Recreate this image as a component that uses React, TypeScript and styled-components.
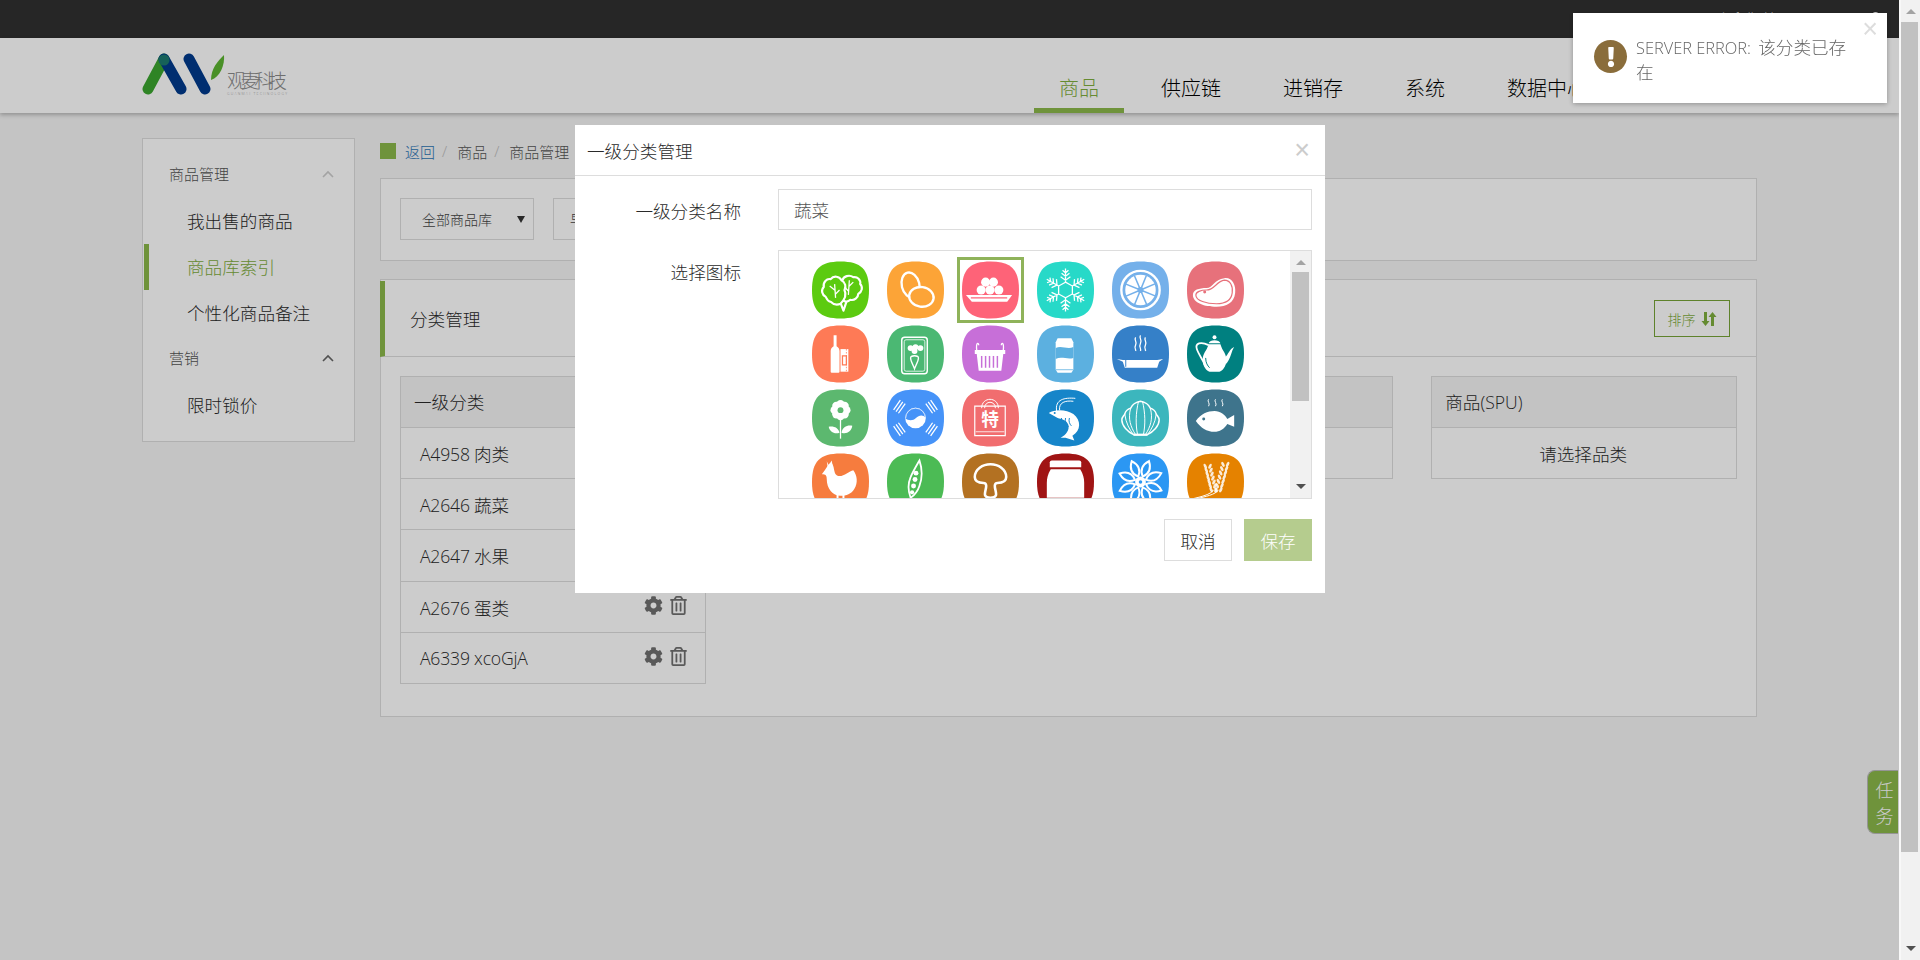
import React from 'react';
import styled, { createGlobalStyle } from 'styled-components';
import { FaCog, FaRegTrashAlt, FaExclamation, FaUser } from 'react-icons/fa';

const GlobalStyle = createGlobalStyle`
  html, body {
    margin: 0;
    height: 100%;
    overflow: hidden;
    background: #f5f5f5;
    color: #2a2a2a;
    font-family: "Open Sans", "Noto Sans CJK SC", sans-serif;
    font-size: 17.6px;
    font-weight: 300;
  }
  * { box-sizing: border-box; }
`;

const GREEN = '#8bb84a';
const GREEN_TEXT = '#7fae3e';
const LINE = '#ddd';

// page
const Shell = styled.div`
  display: flex;
  height: 960px;
  overflow: hidden;
`;

const Page = styled.div`
  width: 1899px;
  flex: none;
  background: #f5f5f5;
`;

const TopBar = styled.div`
  height: 38px;
  background: #303030;
  color: #fff;
  display: flex;
  justify-content: flex-end;
  align-items: center;
  gap: 60px;
  padding-right: 16px;
  font-size: 15px;
  line-height: 20px;
`;

const Header = styled.header`
  height: 75px;
  background: #fff;
  box-shadow: 0 2px 4px rgba(0, 0, 0, 0.25);
  display: flex;
  justify-content: space-between;
  padding: 0 287px 0 128px;
`;

const Logo = styled.svg`
  width: 180px;
  height: 48px;
  margin-top: 15px;
`;

const Nav = styled.nav`
  display: flex;
  gap: 12px;
  align-items: flex-end;
`;

const NavItem = styled.a<{ $active?: boolean }>`
  height: 75px;
  padding: 36px 25px 0;
  font-size: 20px;
  line-height: 30px;
  white-space: nowrap;
  color: ${(p) => (p.$active ? GREEN_TEXT : '#000')};
  border-bottom: 5px solid ${(p) => (p.$active ? GREEN : 'transparent')};
`;

const Container = styled.div`
  display: flex;
  gap: 25px;
  padding: 25px 142px 0;
  align-items: flex-start;
`;

// sidebar
const Sidebar = styled.aside`
  width: 213px;
  flex: none;
  background: #fff;
  border: 1px solid ${LINE};
  padding: 13px 0 13px 1px;
`;

const SideGroup = styled.div`
  height: 46px;
  padding: 0 20px 3px 25px;
  display: flex;
  justify-content: space-between;
  align-items: center;
  font-size: 15px;
  color: #555;
`;

const Chevron = styled.svg<{ $dim?: boolean }>`
  width: 12px;
  height: 8px;
  fill: none;
  stroke: ${(p) => (p.$dim ? '#ccc' : '#666')};
  stroke-width: 1.6;
`;

const SideItem = styled.a<{ $active?: boolean }>`
  display: block;
  height: 46px;
  line-height: 46px;
  padding-left: 38px;
  font-size: 17.6px;
  color: ${(p) => (p.$active ? GREEN_TEXT : '#2a2a2a')};
  border-left: 5px solid ${(p) => (p.$active ? GREEN : 'transparent')};
`;

// main column
const Main = styled.main`
  flex: 1;
  min-width: 0;
`;

const Crumbs = styled.div`
  display: flex;
  align-items: center;
  height: 16px;
  margin: 5px 0 19px;
  font-size: 15px;
  color: #555;
`;

const CrumbMark = styled.span`
  width: 16px;
  height: 16px;
  background: ${GREEN};
  margin-right: 9px;
`;

const CrumbLink = styled.a`
  color: #2a74b5;
`;

const CrumbSlash = styled.span`
  color: #bbb;
  margin: 0 10px 0 7px;
`;

const FilterPanel = styled.section`
  height: 83px;
  background: #fff;
  border: 1px solid ${LINE};
  padding: 19px;
  display: flex;
  gap: 19px;
  margin-bottom: 18px;
`;

const Select = styled.div<{ $inset: number }>`
  width: 134px;
  height: 42px;
  border: 1px solid ${LINE};
  padding: 0 8px 0 ${(p) => p.$inset}px;
  display: flex;
  justify-content: space-between;
  align-items: center;
  font-size: 14px;
  color: #444;
`;

const Caret = styled.span`
  width: 0;
  height: 0;
  border-left: 4px solid transparent;
  border-right: 4px solid transparent;
  border-top: 7px solid #333;
`;

const CategoryPanel = styled.section`
  background: #fff;
  border: 1px solid ${LINE};
  height: 438px;
`;

const PanelHead = styled.div`
  height: 76px;
  margin: 1px 0 0 -1px;
  border-left: 5px solid ${GREEN};
  border-bottom: 1px solid ${LINE};
  display: flex;
  justify-content: space-between;
  align-items: center;
  padding: 0 26px 0 25px;
`;

const SortButton = styled.button`
  width: 76px;
  height: 37px;
  border: 1px solid #76a336;
  background: #fff;
  color: ${GREEN_TEXT};
  font: inherit;
  font-size: 14px;
  display: flex;
  align-items: center;
  justify-content: center;
  gap: 5px;
  padding: 0;
`;

const Columns = styled.div`
  display: grid;
  grid-template-columns: repeat(4, 1fr);
  gap: 38px;
  padding: 19px 19px 0;
  align-items: start;
`;

const Table = styled.div`
  border: 1px solid ${LINE};
  border-bottom: 0;
`;

const TableHead = styled.div`
  height: 51px;
  line-height: 50px;
  padding-left: 13px;
  background: #f4f4f4;
  border-bottom: 1px solid ${LINE};
`;

const TableRow = styled.div`
  height: 51.2px;
  padding: 1px 17px 0 19px;
  border-bottom: 1px solid ${LINE};
  display: flex;
  justify-content: space-between;
  align-items: center;
  letter-spacing: -0.2px;
`;

const EmptyRow = styled(TableRow)`
  justify-content: center;
  letter-spacing: 0;
  padding: 0 19px 0 17px;
`;

const RowTools = styled.span`
  display: flex;
  gap: 6px;
  align-items: center;
  color: #707070;
  font-size: 19px;
  margin-top: -3px;
`;

const TaskTab = styled.div`
  position: fixed;
  right: 22px;
  top: 770px;
  width: 31px;
  height: 64px;
  background: ${GREEN};
  border: 1px solid #bbb;
  border-right: 0;
  border-radius: 8px 0 0 8px;
  color: #fff;
  font-size: 18px;
  line-height: 26px;
  text-align: center;
  padding: 6px 0 0 3px;
`;

// browser scrollbar, drawn because the window is fixed
const PageScroll = styled.div`
  width: 21px;
  flex: none;
  background: #f1f1f1;
  border-left: 2px solid #f8f8f8;
  padding: 0 2px 0 0;
  display: flex;
  flex-direction: column;
  align-items: stretch;
  position: relative;
`;

const PageThumb = styled.div`
  height: 830px;
  margin-top: 22px;
  background: #c1c1c1;
`;

const ArrowUp = styled.span`
  position: absolute;
  left: 50%;
  margin-left: -5px;
  top: 9px;
  width: 0;
  height: 0;
  border-left: 5px solid transparent;
  border-right: 5px solid transparent;
  border-bottom: 5px solid #a3a3a3;
`;

const ArrowDown = styled.span`
  position: absolute;
  left: 50%;
  margin-left: -5px;
  bottom: 9px;
  width: 0;
  height: 0;
  border-left: 5px solid transparent;
  border-right: 5px solid transparent;
  border-top: 5px solid #505050;
`;

// overlay and modal
const Backdrop = styled.div`
  position: fixed;
  left: 0;
  top: 0;
  width: 1899px;
  height: 960px;
  background: rgba(0, 0, 0, 0.2);
`;

const Modal = styled.div`
  position: fixed;
  left: 575px;
  top: 125px;
  width: 750px;
  height: 468px;
  background: #fff;
`;

const ModalHead = styled.div`
  height: 51px;
  border-bottom: 1px solid ${LINE};
  display: flex;
  justify-content: space-between;
  align-items: center;
  padding: 0 15px 0 12px;
`;

const CloseX = styled.span`
  color: #ccc;
  font-size: 27px;
  font-family: "Liberation Sans", sans-serif;
  line-height: 1;
`;

const ModalBody = styled.div`
  padding: 13px 13px 0 0;
`;

const FormRow = styled.div`
  display: flex;
  margin-bottom: 20px;
`;

const FormLabel = styled.label`
  width: 166px;
  flex: none;
  text-align: right;
  line-height: 44px;
  height: 41px;
  margin-right: 37px;
`;

const NameInput = styled.div`
  flex: 1;
  height: 41px;
  border: 1px solid ${LINE};
  padding: 0 15px;
  line-height: 41px;
  color: #555;
`;

const IconBox = styled.div`
  flex: 1;
  height: 249px;
  border: 1px solid ${LINE};
  display: flex;
  overflow: hidden;
`;

const IconGrid = styled.div`
  flex: 1;
  display: grid;
  grid-template-columns: repeat(6, 75px);
  grid-auto-rows: 64px;
  padding: 7px 0 0 24px;
  align-content: start;
`;

const IconCell = styled.div<{ $selected?: boolean }>`
  position: relative;
  display: flex;
  align-items: center;
  justify-content: center;
  &::after {
    content: '';
    display: ${(p) => (p.$selected ? 'block' : 'none')};
    position: absolute;
    left: 4px;
    right: 4px;
    top: -1px;
    bottom: -1px;
    border: 3px solid #8fb35a;
  }
`;

const IconSvg = styled.svg`
  width: 57px;
  height: 58px;
  display: block;
`;

const BoxScroll = styled.div`
  width: 21px;
  flex: none;
  background: #f1f1f1;
  position: relative;
  padding: 21px 2px 0;
`;

const BoxThumb = styled.div`
  height: 129px;
  background: #c1c1c1;
`;

const ModalFoot = styled.div`
  display: flex;
  justify-content: flex-end;
  gap: 12px;
`;

const FootButton = styled.button<{ $primary?: boolean }>`
  width: 68px;
  height: 42px;
  font: inherit;
  padding: 0;
  border: 1px solid ${(p) => (p.$primary ? '#b5cc8e' : LINE)};
  background: ${(p) => (p.$primary ? '#b5cc8e' : '#fff')};
  color: ${(p) => (p.$primary ? '#fff' : '#2a2a2a')};
`;

// toast
const Toast = styled.div`
  position: fixed;
  left: 1573px;
  top: 13px;
  width: 314px;
  height: 90px;
  background: #fff;
  box-shadow: 0 1px 5px rgba(0, 0, 0, 0.3);
  display: flex;
  padding: 22px 22px 0 21px;
  gap: 9px;
`;

const ToastIcon = styled.span`
  width: 33px;
  height: 33px;
  flex: none;
  margin-top: 5px;
  border-radius: 50%;
  background: #8a6d3b;
  color: #fff;
  font-size: 20px;
  display: flex;
  align-items: center;
  justify-content: center;
`;

const ToastText = styled.div`
  color: #666;
  font-size: 16.4px;
  line-height: 25px;
  width: 222px;
`;

const ToastCjk = styled.span`
  font-size: 17.6px;
  margin-left: 3px;
`;

const ToastClose = styled(CloseX)`
  position: absolute;
  right: 9px;
  top: 3px;
  color: #ddd;
`;

// category pictures, all drawn on a 58x58 tile
const W = '#fff';
const spin = (n: number) => Array.from({ length: n }, (_, i) => (i * 360) / n);

const sheaf = (x1: number, y1: number, x2: number, y2: number, sx: number) => (
  <g key={x1}>
    <path d={`M${x2} ${y2}C${x2 - 3} ${y2 + 5} ${sx + 8} ${y2 + 7} ${sx} 46`} fill="none" stroke={W} strokeWidth="1" />
    {[0, 1, 2, 3, 4, 5, 6].map((i) => {
      const x = x1 + ((x2 - x1) * i) / 6;
      const y = y1 + ((y2 - y1) * i) / 6;
      return (
        <g key={i} opacity="0.85">
          <ellipse cx={x - 2.4} cy={y} rx="1.400" ry="2.800" transform={`rotate(-28 ${x - 2.4} ${y})`} />
          <ellipse cx={x + 2.4} cy={y} rx="1.400" ry="2.800" transform={`rotate(28 ${x + 2.4} ${y})`} />
        </g>
      );
    })}
  </g>
);

const icons: { bg: string; draw: (bg: string) => React.ReactNode }[] = [
  {
    bg: '#5ccb10',
    draw: () => (
      <g fill="none" stroke={W} strokeWidth="2.200" strokeLinejoin="round">
        <path d="M29 43c-4 2-8 0-10-2-3 0-4-3-5-5-4-2-5-7-2-10-1-5 3-9 7-8 3-4 9-3 11 1 4 2 5 7 3 10 2 4 1 9-4 14z" />
        <path d="M31 19c1-4 7-6 11-3 4-1 8 3 7 7 3 3 2 8-2 10 0 4-4 7-8 6-2 2-5 2-7 1" />
        <path d="M23 23l1 14M23 29l-5-4M24 33l4-4M38 19l-1 15M38 25l4-4M37 30l-4-4" strokeWidth="1.300" />
        <path d="M29 42l3 8 3-9" />
      </g>
    ),
  },
  {
    bg: '#fca437',
    draw: (bg) => (
      <g stroke={W} strokeWidth="2.400" fill={bg}>
        <ellipse cx="24" cy="24" rx="9" ry="13" transform="rotate(-14 24 24)" />
        <ellipse cx="35" cy="36" rx="12.500" ry="10" transform="rotate(8 35 36)" />
      </g>
    ),
  },
  {
    bg: '#fe6378',
    draw: (bg) => (
      <g fill={W}>
        <circle cx="24" cy="21" r="4.600" />
        <circle cx="32" cy="21" r="4.600" />
        <circle cx="19.500" cy="29" r="4.600" />
        <circle cx="28.500" cy="29" r="4.600" />
        <circle cx="37.500" cy="29" r="4.600" />
        <path d="M4 34h47l-5 7H10z" />
        <path d="M9 37h37" stroke={bg} strokeWidth="1.300" />
      </g>
    ),
  },
  {
    bg: '#27d9c8',
    draw: () => (
      <g stroke={W} strokeWidth="1.300" fill="none">
        {spin(6).map((a) => (
          <g key={a} transform={`rotate(${a} 29 29)`}>
            <path d="M29 21V7M26 9l3 2.500 3-2.500M25 12l4 3 4-3M24 15.500l5 3.500 5-3.500" />
          </g>
        ))}
        <path d="M29 21l7 4v8l-7 4-7-4v-8z" />
      </g>
    ),
  },
  {
    bg: '#74b0ea',
    draw: (bg) => (
      <g>
        <circle cx="29" cy="29" r="19.500" fill="none" stroke={W} strokeWidth="2.400" />
        <circle cx="29" cy="29" r="15.500" fill={W} />
        {spin(8).map((a) => (
          <path key={a} d="M29 29V13" transform={`rotate(${a + 22} 29 29)`} stroke={bg} strokeWidth="1.600" />
        ))}
        <circle cx="29" cy="29" r="3" fill={bg} />
      </g>
    ),
  },
  {
    bg: '#e7717b',
    draw: (bg) => (
      <g>
        <path d="M6 34c0-5 6-7 14-7 6 0 8-9 18-10 8-1 12 7 11 15-1 10-9 14-19 14C18 46 6 42 6 34z" fill={W} />
        <path d="M9 34c0-3 5-5 11-5 8 0 10-9 18-10 6 0 9 6 8 13-1 8-8 11-16 11-10 0-21-3-21-9z" fill="none" stroke={bg} strokeWidth="1.200" />
        <circle cx="18" cy="31" r="1.500" fill={bg} />
      </g>
    ),
  },
  {
    bg: '#fe7a56',
    draw: (bg) => (
      <g fill={W}>
        <path d="M22 10h3v11c2 1 3 3 3 5v21c0 1-1 1-1 1h-7s-1 0-1-1V26c0-2 1-4 3-5z" />
        <path d="M29 24h8v23h-8z" />
        <path d="M31 31h4v9h-4z" fill="none" stroke={bg} strokeWidth="1.300" />
        <path d="M35 24v23" stroke={bg} strokeWidth="0.800" strokeDasharray="1.500 1.500" />
      </g>
    ),
  },
  {
    bg: '#4bb873',
    draw: () => (
      <g stroke={W} fill="none">
        <rect x="15" y="12" width="26" height="37" rx="3" strokeWidth="1.500" />
        <rect x="17.500" y="14.500" width="21" height="32" rx="2" strokeWidth="0.800" />
        <g fill={W} stroke="none">
          <circle cx="24" cy="23" r="3" />
          <circle cx="29" cy="22" r="3" />
          <circle cx="34" cy="23" r="3" />
          <circle cx="28" cy="26" r="3" />
        </g>
        <path d="M24 33c0-3 8-3 8 0s-3 8-4 11c-1-3-4-8-4-11z" strokeWidth="1.400" />
      </g>
    ),
  },
  {
    bg: '#c76fd8',
    draw: (bg) => (
      <g>
        <path d="M15 25c-1-8 2-8 2-5M42 25c1-8-2-8-2-5" fill="none" stroke={W} strokeWidth="1.300" />
        <path d="M13 25h31v4h-2l-2 17H17l-2-17h-2z" fill={W} />
        {[20, 24, 28, 32, 36].map((x) => (
          <path key={x} d={`M${x} 31v12`} stroke={bg} strokeWidth="1.500" />
        ))}
      </g>
    ),
  },
  {
    bg: '#5cb0e0',
    draw: (bg) => (
      <g>
        <path d="M21 13h14l2 4v28l-2 3H21l-2-3V17z" fill={W} />
        <path d="M19 23c6-3 12 2 18-1v11c-6 2-12-2-18 1z" fill={bg} />
        <path d="M19 45h18" stroke={bg} strokeWidth="0.800" />
      </g>
    ),
  },
  {
    bg: '#3580c8',
    draw: (bg) => (
      <g>
        <path d="M24 12c-2 3 2 4 0 8s1 4 0 6M29 10c-2 3 2 4 0 8s1 5 0 8M34 12c-2 3 2 4 0 8s1 4 0 6" fill="none" stroke={W} strokeWidth="1.300" />
        <path d="M5 34l6 1h35l6-1-4 3-2 6H13l-2-6z" fill={W} />
        <path d="M14 35v7" stroke={bg} strokeWidth="1" />
      </g>
    ),
  },
  {
    bg: '#008080',
    draw: (bg) => (
      <g fill={W}>
        <circle cx="28" cy="12" r="2" />
        <path d="M22 18c1-4 11-4 12 0z" />
        <path d="M22 19h12c2 7 6 9 6 16 0 7-4 11-7 12H23c-3-1-7-5-7-12 0-7 4-9 6-16z" />
        <path d="M39 32c3-2 4-8 9-10-3 4-3 12-9 18z" />
        <path d="M22 20c-8-4-14-2-12 4 2 6 7 12 8 16" fill="none" stroke={W} strokeWidth="1.800" />
        <path d="M19 33c0 5 2 8 4 10" fill="none" stroke={bg} strokeWidth="1" />
      </g>
    ),
  },
  {
    bg: '#5cb86f',
    draw: (bg) => (
      <g fill={W}>
        {spin(8).map((a) => (
          <circle key={a} cx="29" cy="15" r="4.200" transform={`rotate(${a} 29 21)`} />
        ))}
        <circle cx="29" cy="21" r="6" />
        <circle cx="29" cy="21" r="3" fill={bg} />
        <path d="M29 30v20" stroke={W} strokeWidth="1.300" />
        <path d="M28 44c-1-5-6-7-11-6 1 5 6 8 11 6zM30 44c1-6 6-8 11-7-1 6-6 9-11 7z" />
      </g>
    ),
  },
  {
    bg: '#4693f8',
    draw: (bg) => (
      <g>
        <circle cx="29" cy="29" r="10.500" fill={W} />
        <path d="M18.500 29c0-7 5-10.500 10.500-10.500S39.500 22 39.500 29c-3-4-7-3-10 0s-8 3-11 0z" fill={bg} />
        <path d="M19 29a10 10 0 0 1 20 0" fill="none" stroke={W} strokeWidth="0.800" />
        {[-55, 55, 125, 235].map((a) => (
          <g key={a} transform={`rotate(${a} 29 29)`} stroke={W} strokeWidth="1.300">
            <path d="M23 6h12M23 9h12M23 12h12" />
          </g>
        ))}
      </g>
    ),
  },
  {
    bg: '#f16d6f',
    draw: () => (
      <g fill="none" stroke={W}>
        <path d="M13 17h31v30H13z" strokeWidth="1.200" />
        <path d="M14 43h29" strokeWidth="0.800" />
        <path d="M20 19c0-12 17-12 17 0M23 19c0-8 11-8 11 0" strokeWidth="1" />
        <text x="28.500" y="37" fontSize="18" fontWeight="700" fill={W} stroke="none" textAnchor="middle" fontFamily="Noto Sans CJK SC, sans-serif">
          特
        </text>
      </g>
    ),
  },
  {
    bg: '#1685c9',
    draw: (bg) => (
      <g>
        <path d="M20 22C18 10 28 8 39 9M23 21c-1-8 6-10 14-9" fill="none" stroke={W} strokeWidth="1" />
        <path d="M12 24c6-4 18-4 25 1 8 6 8 17-1 22l2 5-9-3h-5c6-3 9-8 8-13-2-5-7-6-11-7z" fill={W} />
        <path d="M25 29c-1 4 1 8 3 10M29 29c-1 4 1 7 3 9M33 29c-1 3 0 6 2 8" fill="none" stroke={bg} strokeWidth="1" />
        <circle cx="18" cy="24" r="1" fill={bg} />
      </g>
    ),
  },
  {
    bg: '#3cb6bd',
    draw: () => (
      <g fill="none" stroke={W} strokeWidth="1.500">
        <path d="M22 46c-6-3-12-9-12-15 0-3 2-4 3-6 1-4 3-5 6-6 2-4 4-6 10-7 6 1 8 3 10 7 3 1 5 2 6 6 1 2 3 3 3 6 0 6-6 12-12 15z" />
        <path d="M24 46c-5-8-8-16-5-27M26 46c-2-10-2-22 1-34M32 46c2-10 2-22-1-34M34 46c5-8 8-16 5-27M22 46c-4-5-8-12-9-21M36 46c4-5 8-12 9-21" strokeWidth="1" />
        <path d="M22 46h14" strokeWidth="2.200" />
      </g>
    ),
  },
  {
    bg: '#3e748c',
    draw: (bg) => (
      <g>
        <path d="M22 10c-2 2 2 4 0 7M29 10c-2 2 2 4 0 7M36 10c-2 2 2 4 0 7" fill="none" stroke={W} strokeWidth="1" />
        <path d="M9 32c5-7 12-10 19-10 6 0 11 4 13 8l7-4v12l-7-3c-3 5-8 8-13 8-8 0-14-4-19-11z" fill={W} />
        <circle cx="17" cy="30" r="1.500" fill={bg} />
      </g>
    ),
  },
  {
    bg: '#f67c3e',
    draw: () => (
      <g fill={W}>
        <path d="M13 17l4-6c2-2 4-1 5 3 1 6 2 9 6 9 5 0 10-5 14-6 4 5 5 13 1 19-3 5-8 7-14 7-8 0-14-7-14-17 0-4-1-5-5-5z" />
        <path d="M15 8l2 4 3-5 1 5-5 2z" />
        <path d="M26 42v9M32 42v9" stroke={W} strokeWidth="2" />
      </g>
    ),
  },
  {
    bg: '#4cbb55',
    draw: () => (
      <g fill="none" stroke={W} strokeWidth="1.800">
        <path d="M33 7c3 9 3 18 0 26-2 6-6 10-9 12-3-8-3-14 0-21 2-5 5-10 9-17z" />
        <g fill={W} stroke="none">
          <circle cx="29.500" cy="20" r="2.500" />
          <circle cx="28.500" cy="26.500" r="2.500" />
          <circle cx="27" cy="33" r="2.500" />
          <circle cx="25.500" cy="39.500" r="2.200" />
        </g>
      </g>
    ),
  },
  {
    bg: '#b37122',
    draw: () => (
      <g fill="none" stroke={W} strokeWidth="2.600">
        <path d="M13 24c0-8 8-13 16-13s16 5 16 13c0 5-5 6-9 6-3 0-3 3-2 7 1 4 2 8-5 8s-6-4-5-8c1-4 1-7-2-7-4 0-9-1-9-6z" />
      </g>
    ),
  },
  {
    bg: '#a01414',
    draw: () => (
      <g fill={W}>
        <path d="M13 9c0-1 1-2 2-2h28c1 0 2 1 2 2v5H13z" />
        <path d="M14 16h30c3 5 4 9 4 14v15H10V30c0-5 1-9 4-14z" />
      </g>
    ),
  },
  {
    bg: '#2b97f3',
    draw: (bg) => (
      <g>
        {spin(8).map((a) => (
          <path key={a} d="M29 23c-5-5-5-11 0-17 5 6 5 12 0 17z" fill="none" stroke={W} strokeWidth="2" transform={`rotate(${a + 22} 29 29)`} />
        ))}
        <circle cx="29" cy="29" r="5.500" fill={W} />
        <circle cx="29" cy="29" r="1.800" fill={bg} />
      </g>
    ),
  },
  {
    bg: '#e58200',
    draw: () => <g fill={W}>{[sheaf(21, 13, 27, 37, 6), sheaf(39, 11, 32, 37, 10)]}</g>,
  },
];

const SQUIRCLE = 'M29 0C50 0 58 8 58 29S50 58 29 58 0 50 0 29 8 0 29 0Z';

const categories = ['A4958 肉类', 'A2646 蔬菜', 'A2647 水果', 'A2676 蛋类', 'A6339 xcoGjA'];

const App: React.FC = () => {
  return (
    <>
      <GlobalStyle />
      <Shell>
        <Page>
          <TopBar>
            <span>欢迎您,管理员</span>
            <FaUser />
          </TopBar>
          <Header>
            <Logo viewBox="0 0 180 48">
              <path d="M20 36L36 6" stroke="#3ba52f" strokeWidth="11" strokeLinecap="round" />
              <path d="M36 6L53 36M61 6L77 36" stroke="#003a8c" strokeWidth="11" strokeLinecap="round" />
              <circle cx="36" cy="7" r="5.500" fill="#1c7a70" />
              <path d="M83 27C83 15 90 8 96 2 97 12 92 24 83 27Z" fill="#5cb531" />
              <text x="99" y="35" fontSize="19" fill="#8a8a8a" textLength="60" fontFamily="Noto Sans CJK SC, sans-serif">
                观麦科技
              </text>
              <text x="99" y="42" fontSize="3.500" fill="#999" textLength="60" fontFamily="Open Sans, sans-serif">
                GUANMAI TECHNOLOGY
              </text>
            </Logo>
            <Nav>
              <NavItem $active>商品</NavItem>
              <NavItem>供应链</NavItem>
              <NavItem>进销存</NavItem>
              <NavItem>系统</NavItem>
              <NavItem>数据中心</NavItem>
            </Nav>
          </Header>
          <Container>
            <Sidebar>
              <SideGroup>
                商品管理
                <Chevron $dim viewBox="0 0 12 8">
                  <path d="M1 7l5-5 5 5" />
                </Chevron>
              </SideGroup>
              <SideItem>我出售的商品</SideItem>
              <SideItem $active>商品库索引</SideItem>
              <SideItem>个性化商品备注</SideItem>
              <SideGroup>
                营销
                <Chevron viewBox="0 0 12 8">
                  <path d="M1 7l5-5 5 5" />
                </Chevron>
              </SideGroup>
              <SideItem>限时锁价</SideItem>
            </Sidebar>
            <Main>
              <Crumbs>
                <CrumbMark />
                <CrumbLink>返回</CrumbLink>
                <CrumbSlash>/</CrumbSlash>
                商品
                <CrumbSlash>/</CrumbSlash>
                商品管理
              </Crumbs>
              <FilterPanel>
                <Select $inset={21}>
                  全部商品库
                  <Caret />
                </Select>
                <Select $inset={16}>
                  早餐
                  <Caret />
                </Select>
              </FilterPanel>
              <CategoryPanel>
                <PanelHead>
                  分类管理
                  <SortButton>
                    排序
                    <svg width="16" height="16" viewBox="0 0 16 16" fill="currentColor">
                      <path d="M3 1h3v9h2.500L4.500 15 .5 10H3zM10 6H7.500l4-5 4 5H13v9h-3z" />
                    </svg>
                  </SortButton>
                </PanelHead>
                <Columns>
                  <Table>
                    <TableHead>一级分类</TableHead>
                    {categories.map((name) => (
                      <TableRow key={name}>
                        {name}
                        <RowTools>
                          <FaCog />
                          <FaRegTrashAlt />
                        </RowTools>
                      </TableRow>
                    ))}
                  </Table>
                  <Table>
                    <TableHead>二级分类</TableHead>
                    <EmptyRow>请选择一级分类</EmptyRow>
                  </Table>
                  <Table>
                    <TableHead>品类</TableHead>
                    <EmptyRow>请选择二级分类</EmptyRow>
                  </Table>
                  <Table>
                    <TableHead>商品(SPU)</TableHead>
                    <EmptyRow>请选择品类</EmptyRow>
                  </Table>
                </Columns>
              </CategoryPanel>
            </Main>
          </Container>
          <TaskTab>
            任
            <br />务
          </TaskTab>
          <Backdrop />
          <Modal>
            <ModalHead>
              一级分类管理
              <CloseX>×</CloseX>
            </ModalHead>
            <ModalBody>
              <FormRow>
                <FormLabel>一级分类名称</FormLabel>
                <NameInput>蔬菜</NameInput>
              </FormRow>
              <FormRow>
                <FormLabel>选择图标</FormLabel>
                <IconBox>
                  <IconGrid>
                    {icons.map((icon, i) => (
                      <IconCell key={icon.bg} $selected={i === 2}>
                        <IconSvg viewBox="0 0 58 58">
                          <path d={SQUIRCLE} fill={icon.bg} />
                          {icon.draw(icon.bg)}
                        </IconSvg>
                      </IconCell>
                    ))}
                  </IconGrid>
                  <BoxScroll>
                    <ArrowUp />
                    <BoxThumb />
                    <ArrowDown />
                  </BoxScroll>
                </IconBox>
              </FormRow>
              <ModalFoot>
                <FootButton>取消</FootButton>
                <FootButton $primary>保存</FootButton>
              </ModalFoot>
            </ModalBody>
          </Modal>
          <Toast>
            <ToastIcon>
              <FaExclamation />
            </ToastIcon>
            <ToastText>
              SERVER ERROR: <ToastCjk>该分类已存在</ToastCjk>
            </ToastText>
            <ToastClose>×</ToastClose>
          </Toast>
        </Page>
        <PageScroll>
          <ArrowUp />
          <PageThumb />
          <ArrowDown />
        </PageScroll>
      </Shell>
    </>
  );
};

export default App;
